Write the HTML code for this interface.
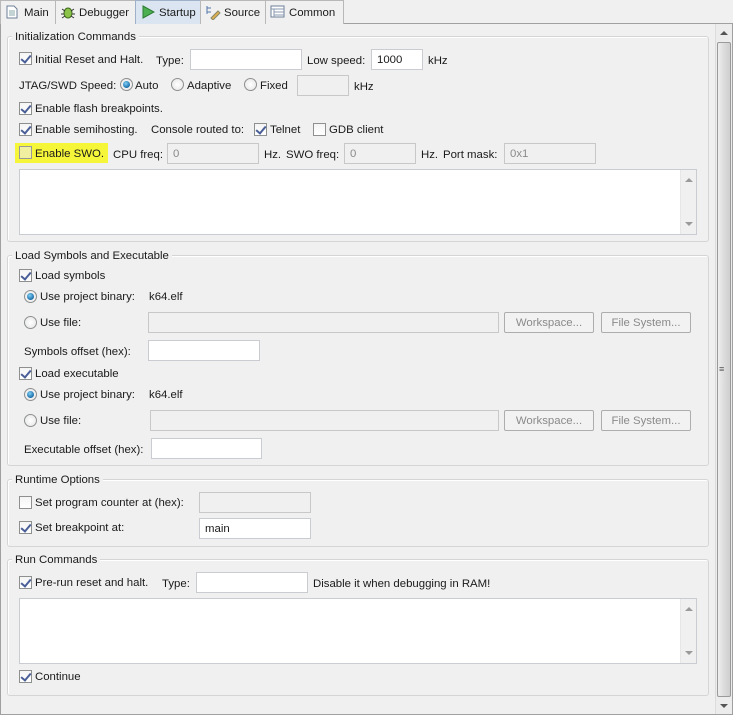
<!DOCTYPE html><html><head><meta charset="utf-8"><style>
*{box-sizing:border-box;margin:0;padding:0}
body{width:733px;height:715px;background:#f0f0f0;font-family:"Liberation Sans",sans-serif;font-size:11.4px;color:#1a1a1a;position:relative;overflow:hidden}
.a{position:absolute}
.t{position:absolute;line-height:14px;white-space:nowrap;padding-top:1px}
.cb{position:absolute;width:13px;height:13px;border:1px solid #8e8f8f;background:linear-gradient(#f4f4f4,#fff)}
.cb.on::after{content:"";position:absolute;left:3px;top:0px;width:4px;height:8px;border:solid #4a5f97;border-width:0 2px 2px 0;transform:rotate(40deg)}
.rd{position:absolute;width:13px;height:13px;border:1px solid #8e8f8f;border-radius:50%;background:radial-gradient(#fff,#e4e4e4)}
.rd.on::after{content:"";position:absolute;left:2px;top:2px;width:7px;height:7px;border-radius:50%;background:radial-gradient(circle at 40% 35%,#7fd0f5,#1a6ca8 70%)}
.in{position:absolute;border:1px solid #c9ccd0;background:#fff;padding-left:5px;line-height:21px}
.in.d{background:#f0f0f0;border-color:#c8c8c8;color:#8a8a8a}
.bt{position:absolute;border:1px solid #adadad;border-radius:2px;background:#f2f2f2;color:#8a8a8a;text-align:center;line-height:20px}
.grp{position:absolute;border:1px solid #d5d5d5;border-radius:3px;box-shadow:inset 1px 1px 0 #fff}
.gt{position:absolute;background:#f0f0f0;padding:1px 3px 0 3px;line-height:14px}
.ta{position:absolute;border:1px solid #c9ccd0;background:#fff}
.ta .sb{position:absolute;right:0;top:0;bottom:0;width:16px;background:#f0f0f0;border-left:1px solid #e6e6e6}
.ta .sb::before{content:"";position:absolute;left:4px;top:8px;border:4px solid transparent;border-bottom:4px solid #9a9a9a;border-top:0}
.ta .sb::after{content:"";position:absolute;left:4px;bottom:8px;border:4px solid transparent;border-top:4px solid #9a9a9a;border-bottom:0}
.tab{position:absolute;top:0;height:24px;border:1px solid #b8b8b8;border-bottom:none;background:#f0f0f0;line-height:25px;padding-left:23px}
</style></head><body>
<div class="a" style="left:0;top:23px;width:733px;height:1px;background:#a0a0a0"></div>
<div class="tab" style="left:0;width:56px">Main</div>
<div class="tab" style="left:55px;width:81px">Debugger</div>
<div class="tab" style="left:135px;width:66px;background:#dbe5f1;border-color:#9fb0c8">Startup</div>
<div class="tab" style="left:200px;width:66px">Source</div>
<div class="tab" style="left:265px;width:79px">Common</div>
<svg class="a" style="left:5px;top:5px" width="14" height="14"><path d="M2 1h7l3 3v9H2z" fill="#fff" stroke="#6d7f99"/><path d="M4 6h6M4 8h6M4 10h6" stroke="#8aa"/></svg>
<svg class="a" style="left:60px;top:5px" width="15" height="14"><ellipse cx="8" cy="8" rx="4" ry="5" fill="#8bc34a" stroke="#3d6b1a"/><path d="M2 4l3 2M14 4l-3 2M1 9h3M12 9h3M2 13l3-2M14 13l-3-2" stroke="#333"/></svg>
<svg class="a" style="left:141px;top:5px" width="14" height="14"><path d="M2 1l11 6-11 6z" fill="#4caf50" stroke="#2e7d32"/></svg>
<svg class="a" style="left:205px;top:4px" width="16" height="16"><path d="M2 2v8M2 4h4M2 8h4" stroke="#5577aa" fill="none"/><path d="M6 14l7-7 2 2-7 7z" fill="#e0b050" stroke="#886"/></svg>
<svg class="a" style="left:270px;top:5px" width="15" height="13"><rect x="1" y="1" width="13" height="11" fill="#fff" stroke="#6d7f99"/><path d="M1 4h13M4 4v8M4 7h10M4 10h10" stroke="#8a9ab0"/></svg>
<div class="a" style="left:715px;top:24px;width:18px;height:691px;background:#ececec;border-left:1px solid #dcdcdc;border-right:1px solid #a0a0a0;border-bottom:1px solid #a0a0a0"></div>
<div class="a" style="left:717px;top:42px;width:14px;height:655px;background:linear-gradient(90deg,#eee,#dcdcdc,#cfcfcf);border:1px solid #9a9a9a;border-radius:2px"></div>
<div class="t" style="left:719px;top:361px;font-size:9px;color:#555">≡</div>
<div class="a" style="left:720px;top:31px;border:4px solid transparent;border-bottom:4px solid #555;border-top:0"></div>
<div class="a" style="left:720px;top:704px;border:4px solid transparent;border-top:4px solid #555;border-bottom:0"></div>
<div class="a" style="left:0;top:24px;width:1px;height:691px;background:#a0a0a0"></div>
<div class="a" style="left:0;top:714px;width:733px;height:1px;background:#a0a0a0"></div>

<div class="grp" style="left:7px;top:36px;width:702px;height:206px"></div>
<div class="gt" style="left:12px;top:29px">Initialization Commands</div>
<div class="cb on" style="left:19px;top:52px"></div><div class="t" style="left:35px;top:52px">Initial Reset and Halt.</div>
<div class="t" style="left:156px;top:53px">Type:</div><div class="in" style="left:190px;top:49px;width:112px;height:21px"></div>
<div class="t" style="left:307px;top:53px">Low speed:</div><div class="in" style="left:371px;top:49px;width:52px;height:21px">1000</div>
<div class="t" style="left:428px;top:53px">kHz</div>
<div class="t" style="left:19px;top:78px">JTAG/SWD Speed:</div>
<div class="rd on" style="left:120px;top:78px"></div><div class="t" style="left:135px;top:78px">Auto</div>
<div class="rd" style="left:171px;top:78px"></div><div class="t" style="left:187px;top:78px">Adaptive</div>
<div class="rd" style="left:244px;top:78px"></div><div class="t" style="left:260px;top:78px">Fixed</div>
<div class="in d" style="left:297px;top:75px;width:52px;height:21px"></div><div class="t" style="left:354px;top:79px">kHz</div>
<div class="cb on" style="left:19px;top:102px"></div><div class="t" style="left:35px;top:101px">Enable flash breakpoints.</div>
<div class="cb on" style="left:19px;top:123px"></div><div class="t" style="left:35px;top:122px">Enable semihosting.</div>
<div class="t" style="left:151px;top:122px">Console routed to:</div>
<div class="cb on" style="left:254px;top:123px"></div><div class="t" style="left:270px;top:122px">Telnet</div>
<div class="cb" style="left:313px;top:123px"></div><div class="t" style="left:329px;top:122px">GDB client</div>
<div class="a" style="left:15px;top:143px;width:93px;height:20px;background:#f5f53a"></div>
<div class="cb" style="left:19px;top:146px;background:#f0f0a0;border-color:#999"></div><div class="t" style="left:35px;top:146px">Enable SWO.</div>
<div class="t" style="left:113px;top:147px">CPU freq:</div><div class="in d" style="left:167px;top:143px;width:92px;height:21px">0</div>
<div class="t" style="left:264px;top:147px">Hz.</div>
<div class="t" style="left:286px;top:147px">SWO freq:</div><div class="in d" style="left:344px;top:143px;width:72px;height:21px">0</div>
<div class="t" style="left:421px;top:147px">Hz.</div>
<div class="t" style="left:443px;top:147px">Port mask:</div><div class="in d" style="left:504px;top:143px;width:92px;height:21px">0x1</div>
<div class="ta" style="left:19px;top:169px;width:678px;height:66px"><div class="sb"></div></div>

<div class="grp" style="left:7px;top:255px;width:702px;height:211px"></div>
<div class="gt" style="left:12px;top:248px">Load Symbols and Executable</div>
<div class="cb on" style="left:19px;top:269px"></div><div class="t" style="left:35px;top:268px">Load symbols</div>
<div class="rd on" style="left:24px;top:290px"></div><div class="t" style="left:40px;top:289px">Use project binary:</div><div class="t" style="left:149px;top:289px">k64.elf</div>
<div class="rd" style="left:24px;top:316px"></div><div class="t" style="left:40px;top:315px">Use file:</div>
<div class="in d" style="left:148px;top:312px;width:351px;height:21px"></div>
<div class="bt" style="left:504px;top:312px;width:90px;height:21px">Workspace...</div>
<div class="bt" style="left:601px;top:312px;width:90px;height:21px">File System...</div>
<div class="t" style="left:24px;top:344px">Symbols offset (hex):</div><div class="in" style="left:148px;top:340px;width:112px;height:21px"></div>
<div class="cb on" style="left:19px;top:367px"></div><div class="t" style="left:35px;top:366px">Load executable</div>
<div class="rd on" style="left:24px;top:388px"></div><div class="t" style="left:40px;top:387px">Use project binary:</div><div class="t" style="left:149px;top:387px">k64.elf</div>
<div class="rd" style="left:24px;top:414px"></div><div class="t" style="left:40px;top:413px">Use file:</div>
<div class="in d" style="left:150px;top:410px;width:349px;height:21px"></div>
<div class="bt" style="left:504px;top:410px;width:90px;height:21px">Workspace...</div>
<div class="bt" style="left:601px;top:410px;width:90px;height:21px">File System...</div>
<div class="t" style="left:24px;top:442px">Executable offset (hex):</div><div class="in" style="left:151px;top:438px;width:111px;height:21px"></div>

<div class="grp" style="left:7px;top:479px;width:702px;height:68px"></div>
<div class="gt" style="left:12px;top:472px">Runtime Options</div>
<div class="cb" style="left:19px;top:496px"></div><div class="t" style="left:35px;top:495px">Set program counter at (hex):</div>
<div class="in d" style="left:199px;top:492px;width:112px;height:21px"></div>
<div class="cb on" style="left:19px;top:521px"></div><div class="t" style="left:35px;top:520px">Set breakpoint at:</div>
<div class="in" style="left:199px;top:518px;width:112px;height:21px">main</div>

<div class="grp" style="left:7px;top:559px;width:702px;height:137px"></div>
<div class="gt" style="left:12px;top:552px">Run Commands</div>
<div class="cb on" style="left:19px;top:576px"></div><div class="t" style="left:35px;top:575px">Pre-run reset and halt.</div>
<div class="t" style="left:162px;top:576px">Type:</div><div class="in" style="left:196px;top:572px;width:112px;height:21px"></div>
<div class="t" style="left:313px;top:576px">Disable it when debugging in RAM!</div>
<div class="ta" style="left:19px;top:598px;width:678px;height:66px"><div class="sb"></div></div>
<div class="cb on" style="left:19px;top:670px"></div><div class="t" style="left:35px;top:669px">Continue</div>
</body></html>
